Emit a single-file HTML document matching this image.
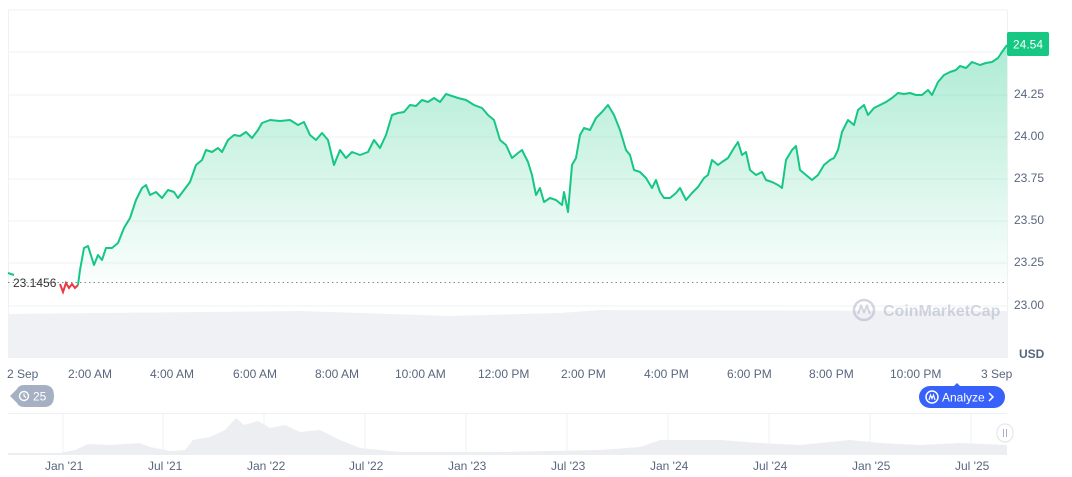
<!DOCTYPE html>
<html><head><style>
body{margin:0;width:1072px;height:477px;background:#fff;font-family:"Liberation Sans",sans-serif;overflow:hidden;position:relative}
.t{position:absolute;font-size:12px;color:#58667e}
.y{position:absolute;left:1014px;font-size:12px;color:#58667e}
</style></head><body>
<svg width="1072" height="477" style="position:absolute;left:0;top:0">
<defs><linearGradient id="g" x1="0" y1="0" x2="0" y2="1"><stop offset="0" stop-color="#16c784" stop-opacity="0.35"/><stop offset="1" stop-color="#16c784" stop-opacity="0.02"/></linearGradient></defs>
<g stroke="#eff2f5" stroke-width="1">
<line x1="8" y1="52" x2="1007" y2="52"/><line x1="8" y1="95" x2="1007" y2="95"/><line x1="8" y1="137" x2="1007" y2="137"/><line x1="8" y1="179" x2="1007" y2="179"/><line x1="8" y1="221" x2="1007" y2="221"/><line x1="8" y1="263" x2="1007" y2="263"/><line x1="8" y1="306" x2="1007" y2="306"/>
<line x1="1007.5" y1="10" x2="1007.5" y2="358"/><line x1="8" y1="10" x2="1007" y2="10"/><line x1="8.5" y1="10" x2="8.5" y2="358"/>
</g>
<path d="M8,314 L300,311 L450,316 L560,313 L600,310 L1007,311 L1007,358 L8,358Z" fill="#f0f1f4"/>
<polygon fill="url(#g)" points="8,273 12,275 30,278 60,283 80,270 84,248 88,246 94,265 98,255 102,260 106,248 112,248 118,243 124,228 130,218 136,200 142,188 146,185 150,195 156,192 162,198 168,190 174,192 178,198 184,190 190,182 196,165 202,160 206,150 212,152 218,148 222,152 228,140 234,135 240,136 246,132 252,138 258,130 262,123 270,120 280,121 290,120 298,125 304,122 310,135 316,140 322,133 328,140 334,165 340,150 346,158 352,152 360,155 368,152 374,140 380,148 386,135 392,115 398,113 404,112 410,105 416,106 422,100 428,102 434,98 440,102 446,94 452,96 458,98 466,100 474,105 482,108 488,115 494,120 500,140 506,145 512,158 518,153 522,150 528,162 532,175 536,195 540,188 544,202 550,198 556,200 562,205 564,192 568,212 572,165 576,158 580,135 584,128 590,130 596,118 602,112 608,105 614,115 620,130 626,150 630,155 634,170 640,172 646,178 652,188 656,180 660,192 664,198 670,198 676,193 680,188 686,200 692,193 698,187 704,178 708,175 712,160 718,165 722,162 728,158 734,148 738,142 742,155 746,152 750,170 756,175 762,172 766,180 772,182 778,185 782,188 786,160 792,150 796,146 800,170 806,175 812,180 818,175 824,165 830,160 834,158 838,150 842,132 848,120 854,125 858,110 864,105 868,115 874,108 880,105 886,102 892,98 898,93 904,94 910,93 916,95 922,95 928,90 932,95 938,82 944,75 950,72 956,70 960,66 966,68 972,62 980,65 986,63 992,62 998,58 1002,52 1007,45 1007,282 8,282"/>
<line x1="8" y1="282.5" x2="1007" y2="282.5" stroke="#888" stroke-dasharray="1.5 3" stroke-width="1"/>
<polyline fill="none" stroke="#16c784" stroke-width="2" points="8,273 14,275"/>
<polyline fill="none" stroke="#ea3943" stroke-width="2" points="60,284 63,292 66,283 69,288 72,284 75,288 78,285"/>
<polyline fill="none" stroke="#16c784" stroke-width="2" stroke-linejoin="round" points="78,285 80,270 84,248 88,246 94,265 98,255 102,260 106,248 112,248 118,243 124,228 130,218 136,200 142,188 146,185 150,195 156,192 162,198 168,190 174,192 178,198 184,190 190,182 196,165 202,160 206,150 212,152 218,148 222,152 228,140 234,135 240,136 246,132 252,138 258,130 262,123 270,120 280,121 290,120 298,125 304,122 310,135 316,140 322,133 328,140 334,165 340,150 346,158 352,152 360,155 368,152 374,140 380,148 386,135 392,115 398,113 404,112 410,105 416,106 422,100 428,102 434,98 440,102 446,94 452,96 458,98 466,100 474,105 482,108 488,115 494,120 500,140 506,145 512,158 518,153 522,150 528,162 532,175 536,195 540,188 544,202 550,198 556,200 562,205 564,192 568,212 572,165 576,158 580,135 584,128 590,130 596,118 602,112 608,105 614,115 620,130 626,150 630,155 634,170 640,172 646,178 652,188 656,180 660,192 664,198 670,198 676,193 680,188 686,200 692,193 698,187 704,178 708,175 712,160 718,165 722,162 728,158 734,148 738,142 742,155 746,152 750,170 756,175 762,172 766,180 772,182 778,185 782,188 786,160 792,150 796,146 800,170 806,175 812,180 818,175 824,165 830,160 834,158 838,150 842,132 848,120 854,125 858,110 864,105 868,115 874,108 880,105 886,102 892,98 898,93 904,94 910,93 916,95 922,95 928,90 932,95 938,82 944,75 950,72 956,70 960,66 966,68 972,62 980,65 986,63 992,62 998,58 1002,52 1007,45"/>
<rect x="1007" y="32" width="42" height="24" rx="2" fill="#16c784"/>
<text x="1028" y="48.5" font-size="12" fill="#fff" text-anchor="middle" font-family="Liberation Sans">24.54</text>
<g opacity="0.5"><circle cx="864" cy="310" r="10" fill="none" stroke="#a6b0c3" stroke-width="2.5"/><path d="M858,314 L861,306 L864,312 L867,306 L870,314" fill="none" stroke="#a6b0c3" stroke-width="2"/>
<text x="883" y="316" font-size="16" font-weight="bold" fill="#a6b0c3" font-family="Liberation Sans">CoinMarketCap</text></g>
<g stroke="#eff2f5"><line x1="8" y1="413.5" x2="1007" y2="413.5"/><line x1="63" y1="413" x2="63" y2="455"/><line x1="163" y1="413" x2="163" y2="455"/><line x1="264" y1="413" x2="264" y2="455"/><line x1="365" y1="413" x2="365" y2="455"/><line x1="466" y1="413" x2="466" y2="455"/><line x1="567" y1="413" x2="567" y2="455"/><line x1="668" y1="413" x2="668" y2="455"/><line x1="769" y1="413" x2="769" y2="455"/><line x1="870" y1="413" x2="870" y2="455"/><line x1="971" y1="413" x2="971" y2="455"/></g>
<path d="M8,453 L60,453 L75,450 L88,444 L110,445 L140,443 L150,447 L170,451 L185,450 L193,440 L210,437 L225,430 L236,418 L244,425 L258,421 L270,428 L285,425 L300,432 L320,430 L340,440 L360,448 L400,452 L500,452 L550,451 L600,450 L640,447 L660,440 L690,440 L720,440 L760,443 L800,445 L850,440 L880,443 L920,445 L960,443 L1007,445 L1007,455 L8,455Z" fill="#eceef2"/>
<rect x="997" y="424" width="16" height="18" rx="8" fill="#fff" stroke="#e0e3e8"/>
<line x1="1003.5" y1="429" x2="1003.5" y2="437" stroke="#a6b0c3"/><line x1="1006.5" y1="429" x2="1006.5" y2="437" stroke="#a6b0c3"/>
<path d="M10,396 L17,389 Q19,385 24,385 L44,385 Q54,385 54,396 Q54,407 44,407 L24,407 Q19,407 17,403Z" fill="#a6b0c3"/>
<circle cx="24" cy="396" r="4.5" fill="none" stroke="#fff" stroke-width="1.4"/><path d="M24,393.5 V396 L26,397.5" stroke="#fff" fill="none" stroke-width="1.2"/>
<text x="33" y="400.5" font-size="12" fill="#fff" font-family="Liberation Sans">25</text>
<path d="M957,383 L961,387 L953,387Z" fill="#3861fb"/>
<rect x="919" y="386" width="86" height="22" rx="11" fill="#3861fb"/>
<circle cx="932" cy="397" r="6" fill="none" stroke="#fff" stroke-width="1.5"/><path d="M929,400 L930.5,395 L932,398.5 L933.5,395 L935,400" stroke="#fff" fill="none" stroke-width="1.2"/>
<text x="942" y="401.5" font-size="12" fill="#fff" font-family="Liberation Sans">Analyze</text>
<path d="M989,393 L993,397 L989,401" stroke="#fff" fill="none" stroke-width="1.5"/>
</svg>
<div class="t" style="left:13px;top:276px;color:#333">23.1456</div>
<div class="y" style="top:87px">24.25</div><div class="y" style="top:129px">24.00</div><div class="y" style="top:171px">23.75</div><div class="y" style="top:213px">23.50</div><div class="y" style="top:255px">23.25</div><div class="y" style="top:298px">23.00</div>
<div class="y" style="top:347px;left:1019px;font-weight:bold">USD</div>
<div class="t" style="left:7px;top:367px">2 Sep</div>
<div class="t" style="left:68px;top:367px">2:00 AM</div>
<div class="t" style="left:150px;top:367px">4:00 AM</div>
<div class="t" style="left:233px;top:367px">6:00 AM</div>
<div class="t" style="left:315px;top:367px">8:00 AM</div>
<div class="t" style="left:395px;top:367px">10:00 AM</div>
<div class="t" style="left:478px;top:367px">12:00 PM</div>
<div class="t" style="left:561px;top:367px">2:00 PM</div>
<div class="t" style="left:644px;top:367px">4:00 PM</div>
<div class="t" style="left:727px;top:367px">6:00 PM</div>
<div class="t" style="left:809px;top:367px">8:00 PM</div>
<div class="t" style="left:890px;top:367px">10:00 PM</div>
<div class="t" style="left:981px;top:367px">3 Sep</div>
<div class="t" style="left:45px;top:459px">Jan '21</div>
<div class="t" style="left:148px;top:459px">Jul '21</div>
<div class="t" style="left:247px;top:459px">Jan '22</div>
<div class="t" style="left:349px;top:459px">Jul '22</div>
<div class="t" style="left:448px;top:459px">Jan '23</div>
<div class="t" style="left:551px;top:459px">Jul '23</div>
<div class="t" style="left:650px;top:459px">Jan '24</div>
<div class="t" style="left:753px;top:459px">Jul '24</div>
<div class="t" style="left:852px;top:459px">Jan '25</div>
<div class="t" style="left:955px;top:459px">Jul '25</div>
</body></html>
